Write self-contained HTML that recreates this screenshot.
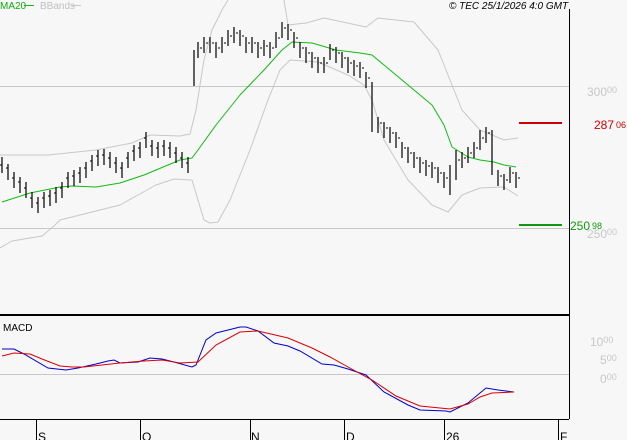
<!DOCTYPE html><html><head><style>
body{margin:0;background:#f7f7f7;width:627px;height:440px;overflow:hidden}
svg{display:block}
text{font-family:"Liberation Sans",sans-serif}
</style></head><body>
<svg width="627" height="440" viewBox="0 0 627 440">
<rect width="627" height="440" fill="#f7f7f7"/>
<line x1="0" y1="86.5" x2="569" y2="86.5" stroke="#c8c8c8"/>
<line x1="0" y1="228.5" x2="569" y2="228.5" stroke="#c8c8c8"/>
<line x1="0" y1="374.5" x2="569" y2="374.5" stroke="#c8c8c8"/>
<polyline fill="none" stroke="#c8c8c8" stroke-linejoin="round" points="0,155 48,155 96,150 132,143 150,135 180,136 190,134 196,110 204,60 212,30 222,10 228,0"/>
<polyline fill="none" stroke="#c8c8c8" stroke-linejoin="round" points="284,0 288,25 306,23 324,18 366,27 378,18 414,22 438,50 462,110 480,130 504,140 518,138"/>
<polyline fill="none" stroke="#c8c8c8" stroke-linejoin="round" points="0,248 12,241 42,236 54,226 60,220 120,205 156,185 174,179 192,180 198,200 204,220 210,223 218,222 230,200 250,150 268,100 280,70 290,60 318,62 348,75 364,85 372,100 384,140 408,180 432,205 448,212 462,195 480,188 504,187 518,196"/>
<polyline fill="none" stroke="#11bb11" stroke-linejoin="round" points="2,202 30,193 60,187 72,186 96,187 120,183 144,175 168,165 180,160 192,158 198,150 216,125 240,95 264,70 282,50 292,42 312,43 336,50 360,53 372,55 384,65 408,85 432,105 444,125 452,147 468,157 480,160 494,162 504,165 516,167"/>
<path fill="none" stroke="#000" stroke-width="1.2" d="M2 157v16M8 164v16M14 172v16M20 177v16M26 182v16M32 192v16M38 197v16M44 192v16M50 190v16M56 187v16M62 182v16M68 172v16M74 170v16M80 167v16M86 162v16M92 155v16M98 150v16M104 149v16M110 152v16M116 157v16M122 162v16M128 152v16M134 145v16M140 142v16M146 132v16M152 140v16M158 142v16M164 140v16M170 142v16M176 147v16M182 152v16M188 157v16M194 50v36M198 42v16M204 37v16M210 37v16M216 42v16M222 37v16M228 30v16M234 27v16M240 30v16M246 37v16M252 37v16M258 42v16M264 40v16M270 42v16M276 32v16M282 22v16M288 24v16M294 32v16M300 42v16M306 47v16M312 52v16M318 57v16M324 57v16M330 44v16M336 47v16M342 52v16M348 57v16M354 60v16M360 62v16M366 72v16M372 82v50M378 117v16M384 122v16M390 127v16M396 132v16M402 142v16M408 147v16M414 152v16M420 157v16M426 160v16M432 162v16M438 167v16M444 172v16M450 165v30M456 150v30M462 152v16M468 147v16M474 142v16M480 130v20M486 127v16M492 130v45M498 170v16M504 174v16M510 167v16M516 172v16"/>
<path fill="none" stroke="#000" d="M0 165h2M6 168h2M12 178h2M18 182h2M24 188h2M30 198h2M36 203h2M42 198h2M48 196h2M54 193h2M60 188h2M66 178h2M72 176h2M78 173h2M84 168h2M90 161h2M96 156h2M102 155h2M108 158h2M114 163h2M120 168h2M126 158h2M132 151h2M138 148h2M144 138h2M150 146h2M156 148h2M162 146h2M168 148h2M174 153h2M180 158h2M186 163h2M200 48h2M206 43h2M212 43h2M218 48h2M224 43h2M230 36h2M236 33h2M242 36h2M248 43h2M254 43h2M260 48h2M266 46h2M272 48h2M278 38h2M284 28h2M290 30h2M296 38h2M302 48h2M308 53h2M314 58h2M320 63h2M326 63h2M332 50h2M338 53h2M344 58h2M350 63h2M356 66h2M362 68h2M368 78h2M380 123h2M386 128h2M392 133h2M398 138h2M404 148h2M410 153h2M416 158h2M422 163h2M428 166h2M434 168h2M440 173h2M446 178h2M458 160h2M464 158h2M470 153h2M476 148h2M482 138h2M488 133h2M500 176h2M506 180h2M512 173h2M518 178h2"/>
<line x1="569.5" y1="9" x2="569.5" y2="419" stroke="#000"/>
<line x1="0" y1="315" x2="569" y2="315" stroke="#000" stroke-width="2"/>
<line x1="0" y1="419.5" x2="569" y2="419.5" stroke="#000"/>
<path stroke="#000" d="M36.5 419v21M140.5 419v21M250.5 419v21M344.5 419v21M444.5 419v21M558.5 419v21"/>
<g font-size="12" fill="#000"><text x="38" y="441">S</text><text x="142" y="441">O</text><text x="251" y="441">N</text><text x="346" y="441">D</text><text x="446" y="441">26</text><text x="560" y="441">F</text></g>
<polyline fill="none" stroke="#0000cc" points="2,349 14,349 24,354 48,368 66,370 78,368 96,364 108,361 114,360 120,363 138,362 150,358 162,359 174,362 192,367 196,365 206,340 216,333 240,327 246,327 258,331 274,343 288,346 300,351 322,364 334,365 348,369 366,375 384,392 408,405 420,410 446,411 450,412 468,403 486,388 498,390 514,392"/>
<polyline fill="none" stroke="#dd0000" points="2,356 14,353 30,354 42,359 60,366 72,367 84,367 102,365 120,363 144,361 162,360 180,363 198,362 216,345 240,332 258,331 288,338 312,348 330,357 348,367 372,380 396,396 420,406 450,409 468,404 480,397 492,393 514,392"/>
<text x="3" y="331" font-size="10" fill="#000">MACD</text>
<text x="0" y="9" font-size="10" fill="#11aa11">MA20</text><line x1="24" y1="5.5" x2="34" y2="5.5" stroke="#11bb11"/>
<text x="40" y="9" font-size="10" fill="#c0c0c0">BBands</text><line x1="72" y1="5.5" x2="81" y2="5.5" stroke="#c8c8c8"/>
<text x="449" y="9" font-size="10" font-style="italic" fill="#000">© TEC 25/1/2026 4:0 GMT</text>
<line x1="519" y1="123" x2="562" y2="123" stroke="#cc0000" stroke-width="2"/>
<line x1="519" y1="225" x2="562" y2="225" stroke="#119911" stroke-width="2"/>
<g font-size="12" fill="#c8c8c8"><text x="587" y="96">300<tspan font-size="9" dy="-3">00</tspan></text><text x="587" y="238">250<tspan font-size="9" dy="-3">00</tspan></text>
<text x="590" y="346">10<tspan font-size="9" dy="-3">00</tspan></text><text x="600" y="364">5<tspan font-size="9" dy="-3">00</tspan></text><text x="600" y="383">0<tspan font-size="9" dy="-3">00</tspan></text></g>
<text x="594" y="129" font-size="12" fill="#cc0000">287<tspan font-size="9" dx="2" dy="-1">06</tspan></text>
<text x="570" y="230" font-size="12" fill="#119911">250<tspan font-size="9" dx="2" dy="-1">98</tspan></text>
</svg>
</body></html>
